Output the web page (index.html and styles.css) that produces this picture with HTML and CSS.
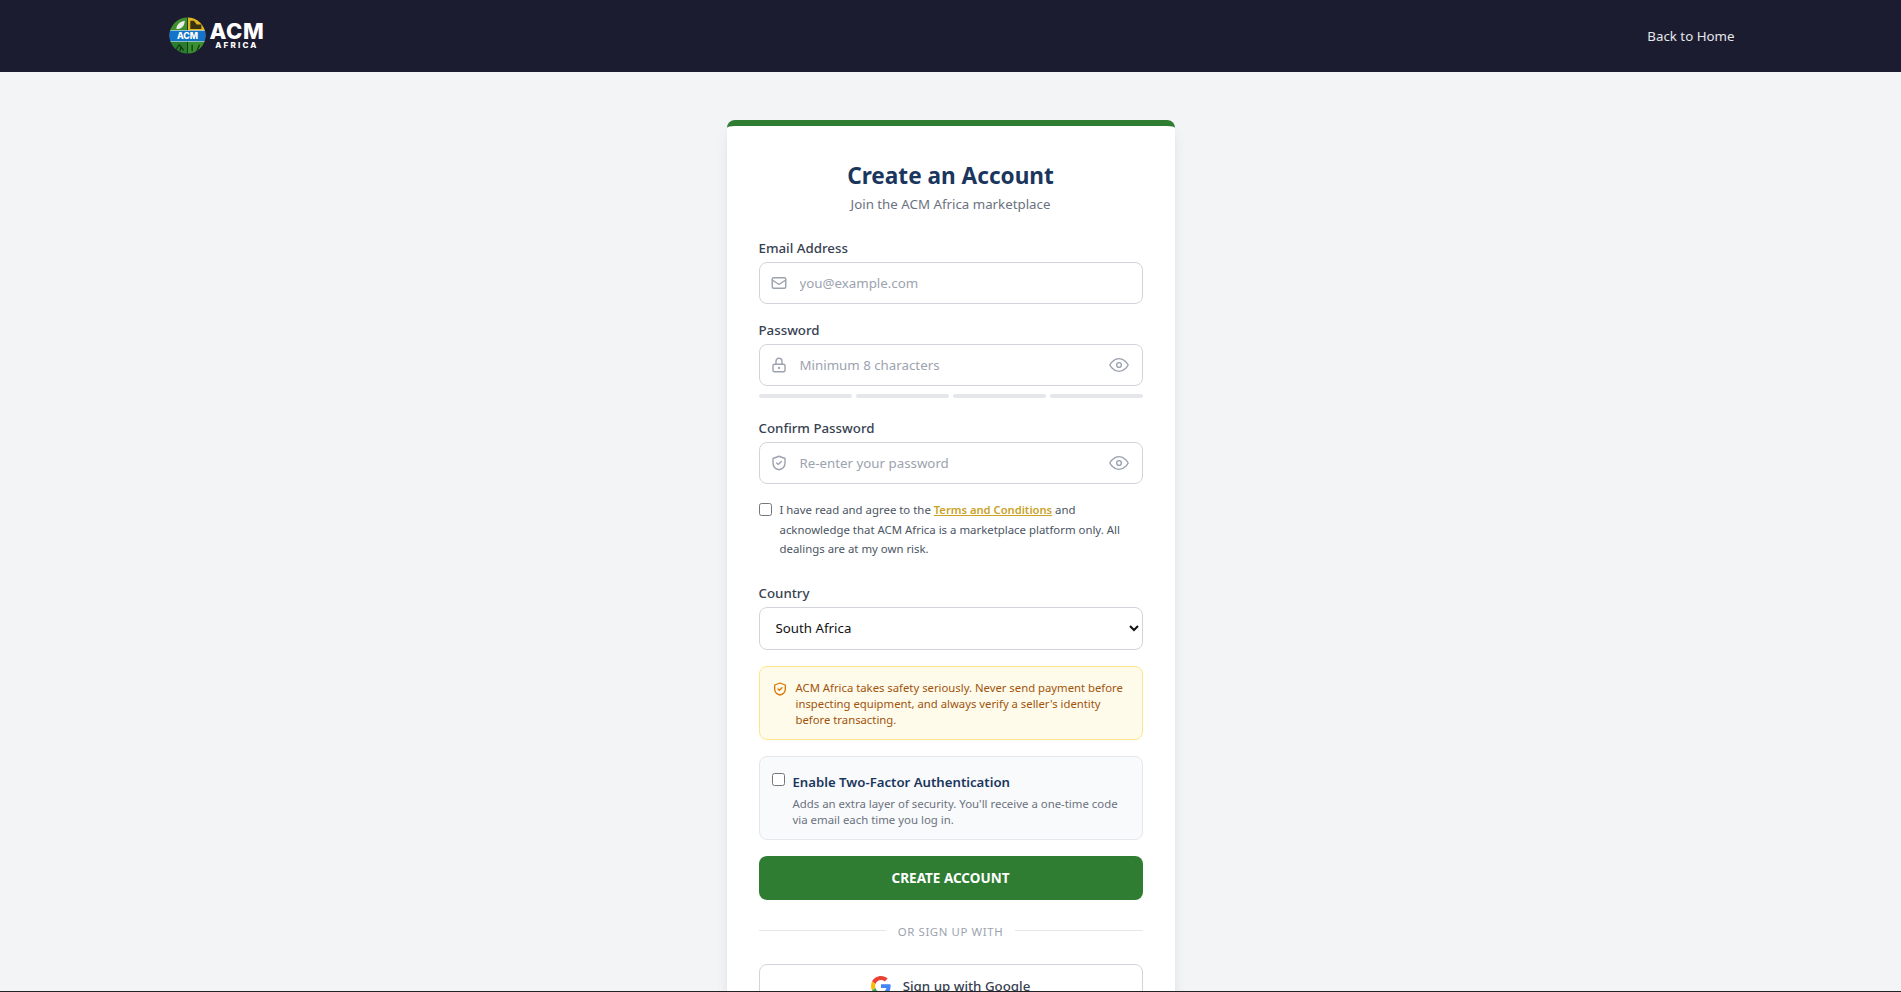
FILE: index.html
```html
<!DOCTYPE html>
<html lang="en">
<head>
<meta charset="utf-8">
<title>Create an Account - ACM Africa</title>
<link rel="stylesheet" href="styles.css">
</head>
<body>
<nav class="nav">
  <div class="nav-inner">
    <a class="brand" href="#">
      <svg class="brand-mark" viewBox="0 0 40 40" aria-hidden="true">
        <defs><clipPath id="disc"><circle cx="20" cy="20" r="19.500"/></clipPath></defs>
        <g clip-path="url(#disc)">
          <rect x="0" y="0" width="20" height="16" fill="#3f8f2e"/>
          <rect x="20" y="0" width="20" height="16" fill="#e2b61f"/>
          <rect x="0" y="26" width="20" height="14" fill="#2a7d2c"/>
          <rect x="20" y="26" width="20" height="14" fill="#3a8f30"/>
          <path d="M8 13c0-5 4-8 9-9 0 5-3 9-9 9z" fill="#e8efe6"/>
          <path d="M23 13V4h4l3 4h5v5z" fill="#3b3312"/>
          <path d="M7 36l4-6 5 6M12 37l1-6M25 37v-7M30 37l3-7" fill="none" stroke="#123a16" stroke-width="1.400"/>
          <path d="M20 0v16M20 26v14" stroke="#12351a" stroke-width="1"/>
          <rect x="0" y="14.500" width="40" height="12" fill="#1275c9" stroke="#e8f2f8" stroke-width=".6"/>
        </g>
        <text class="mark-text" x="20" y="24.200" text-anchor="middle">ACM</text>
      </svg>
      <span class="brand-text"><span class="brand-acm">ACM</span><span class="brand-africa">AFRICA</span></span>
    </a>
    <a class="nav-link" href="#">Back to Home</a>
  </div>
</nav>

<main class="page">
  <section class="card">
    <h1 class="title">Create an Account</h1>
    <p class="subtitle">Join the ACM Africa marketplace</p>

    <form class="form">
      <div class="field">
        <label class="label" for="email">Email Address</label>
        <div class="input-wrap">
          <svg class="ico lead" viewBox="0 0 24 24"><rect x="3" y="5" width="18" height="14" rx="2"/><path d="M3 8l9 6 9-6"/></svg>
          <input class="input" id="email" type="email" placeholder="you@example.com">
        </div>
      </div>

      <div class="field">
        <label class="label" for="pw">Password</label>
        <div class="input-wrap">
          <svg class="ico lead" viewBox="0 0 24 24"><rect x="4" y="11" width="16" height="10" rx="2"/><path d="M8 11V7a4 4 0 0 1 8 0v4"/><circle cx="12" cy="16" r=".6"/></svg>
          <input class="input has-trail" id="pw" type="password" placeholder="Minimum 8 characters">
          <svg class="ico trail" viewBox="0 0 24 24"><path d="M2 12s3.600-7 10-7 10 7 10 7-3.600 7-10 7-10-7-10-7z"/><circle cx="12" cy="12" r="2.600"/></svg>
        </div>
        <div class="strength"><span class="seg"></span><span class="seg"></span><span class="seg"></span><span class="seg"></span></div>
      </div>

      <div class="field">
        <label class="label" for="pw2">Confirm Password</label>
        <div class="input-wrap">
          <svg class="ico lead" viewBox="0 0 24 24"><path d="M12 3l8 3v6c0 5-3.400 8-8 9-4.600-1-8-4-8-9V6z"/><path d="M9 12l2 2 4-4"/></svg>
          <input class="input has-trail" id="pw2" type="password" placeholder="Re-enter your password">
          <svg class="ico trail" viewBox="0 0 24 24"><path d="M2 12s3.600-7 10-7 10 7 10 7-3.600 7-10 7-10-7-10-7z"/><circle cx="12" cy="12" r="2.600"/></svg>
        </div>
      </div>

      <label class="terms">
        <input class="check" type="checkbox">
        <span>I have read and agree to the <a class="terms-link" href="#">Terms and Conditions</a> and acknowledge that ACM Africa is a marketplace platform only. All dealings are at my own risk.</span>
      </label>

      <div class="field">
        <label class="label" for="country">Country</label>
        <select class="select" id="country"><option>South Africa</option><option>Kenya</option><option>Nigeria</option></select>
      </div>

      <div class="alert">
        <svg class="alert-ico" viewBox="0 0 24 24"><path d="M12 3l8 3v6c0 5-3.400 8-8 9-4.600-1-8-4-8-9V6z"/><path d="M9 12l2 2 4-4"/></svg>
        <p class="alert-text">ACM Africa takes safety seriously. Never send payment before inspecting equipment, and always verify a seller's identity before transacting.</p>
      </div>

      <div class="tfa">
        <input class="check tfa-check" type="checkbox" id="tfa">
        <div>
          <label class="tfa-title" for="tfa">Enable Two-Factor Authentication</label>
          <p class="tfa-desc">Adds an extra layer of security. You'll receive a one-time code via email each time you log in.</p>
        </div>
      </div>

      <button class="submit" type="button">CREATE ACCOUNT</button>

      <div class="divider"><span class="divider-text">OR SIGN UP WITH</span></div>

      <button class="google" type="button">
        <svg class="google-ico" viewBox="0 0 48 48"><path fill="#EA4335" d="M24 9.500c3.540 0 6.710 1.220 9.210 3.600l6.850-6.850C35.900 2.380 30.470 0 24 0 14.620 0 6.510 5.380 2.560 13.220l7.980 6.190C12.430 13.720 17.740 9.500 24 9.500z"/><path fill="#4285F4" d="M46.980 24.550c0-1.570-.15-3.090-.38-4.550H24v9.020h12.940c-.58 2.960-2.260 5.480-4.780 7.180l7.730 6c4.510-4.180 7.090-10.360 7.090-17.650z"/><path fill="#FBBC05" d="M10.530 28.590c-.48-1.450-.76-2.990-.76-4.590s.27-3.140.76-4.590l-7.980-6.190C.92 16.460 0 20.120 0 24c0 3.880.92 7.540 2.560 10.780l7.970-6.190z"/><path fill="#34A853" d="M24 48c6.480 0 11.930-2.130 15.890-5.810l-7.730-6c-2.150 1.450-4.920 2.300-8.160 2.300-6.260 0-11.570-4.220-13.470-9.910l-7.980 6.190C6.510 42.620 14.620 48 24 48z"/></svg>
        Sign up with Google
      </button>
    </form>
  </section>
</main>
<div class="edge"></div>
</body>
</html>
```

FILE: styles.css
```css
* { box-sizing: border-box; }
html, body { margin: 0; padding: 0; }
body { background: #f3f4f6; font-family: "Noto Sans", sans-serif; color: #374151; }

.nav { background: #1c1c30; height: 72px; }
.nav-inner { max-width: 1600px; height: 100%; margin: 0 auto; padding: 0 16px 1px; display: flex; align-items: center; justify-content: space-between; }
.brand { display: flex; align-items: center; gap: 4px; margin-left: 2px; text-decoration: none; color: #fff; font-family: Inter, sans-serif; }
.brand-mark { width: 37px; height: 37px; display: block; }
.mark-text { font: 800 9.500px Inter, sans-serif; fill: #fff; }
.brand-text { display: flex; flex-direction: column; align-items: center; color: #fff; }
.brand-acm { font-size: 22px; font-weight: 800; line-height: 20px; letter-spacing: .6px; }
.brand-africa { font-size: 8px; font-weight: 800; line-height: 9px; letter-spacing: 2.200px; }
.nav-link { color: #e5e7eb; font-size: 13.300px; text-decoration: none; }

.page { display: flex; justify-content: center; padding: 48px 16px; }
.card { width: 448px; background: #fff; border-top: 6px solid #2e7d32; border-radius: 8px; padding: 32px; box-shadow: 0 10px 15px -3px rgba(0,0,0,.1), 0 4px 6px -4px rgba(0,0,0,.1); }
.title { margin: 0; text-align: center; font-size: 22.600px; line-height: 36px; font-weight: 700; color: #1a365d; }
.subtitle { margin: 0 0 24px; text-align: center; font-size: 13.300px; line-height: 20px; color: #6b7280; }

.field { margin-bottom: 16px; }
.label { display: block; margin-bottom: 4px; font-size: 13.300px; line-height: 20px; font-weight: 500; color: #374151; }
.input-wrap { position: relative; }
.input { display: block; width: 100%; height: 42px; padding: 0 16px 0 40px; border: 1px solid #d1d5db; border-radius: 8px; background: #fff; font: 13.300px/20px "Noto Sans", sans-serif; color: #111827; outline: 0; }
.input::placeholder { color: #9ca3af; opacity: 1; }
.has-trail { padding-right: 44px; }
.ico { position: absolute; top: 50%; transform: translateY(-50%); fill: none; stroke: #9ca3af; stroke-width: 1.900; stroke-linecap: round; stroke-linejoin: round; }
.lead { left: 11px; width: 18px; height: 18px; }
.trail { right: 13px; width: 22px; height: 22px; stroke-width: 1.500; }

.strength { display: flex; gap: 4px; margin: 8px 0 20px; }
.seg { flex: 1; height: 4px; border-radius: 2px; background: #e5e7eb; }

.terms { display: flex; align-items: flex-start; gap: 8px; margin-bottom: 24px; font-size: 11.400px; line-height: 19.500px; color: #4b5563; }
.check { width: 13px; height: 13px; margin: 3px 0 0; flex: none; }
.terms-link { color: #c9a227; font-size: 11.200px; font-weight: 600; text-decoration: underline; }

.select { display: block; width: 100%; height: 43px; padding: 0 12px; border: 1px solid #d1d5db; border-radius: 8px; background: #fff; font: 13.300px "Noto Sans", sans-serif; color: #111; }

.alert { display: flex; gap: 8px; margin-bottom: 16px; padding: 13px 12px 11px; background: #fffbeb; border: 1px solid #fde68a; border-radius: 8px; }
.alert-ico { width: 16px; height: 16px; margin-top: 1px; flex: none; fill: none; stroke: #d97706; stroke-width: 2; stroke-linecap: round; stroke-linejoin: round; }
.alert-text { margin: 0; font-size: 11.300px; line-height: 16px; color: #a0540c; }

.tfa { display: flex; align-items: flex-start; gap: 8px; margin-bottom: 16px; padding: 12px 12px 11px; background: #f9fafb; border: 1px solid #e5e7eb; border-radius: 8px; }
.tfa-check { margin-top: 4px; }
.tfa-title { display: block; font-size: 13.200px; line-height: 20px; font-weight: 600; color: #1a365d; margin-top: 3px; }
.tfa-desc { margin: 4px 0 0; font-size: 11.400px; line-height: 16px; color: #6b7280; }

.submit { display: block; width: 100%; height: 44px; border: 0; border-radius: 8px; background: #2e7d32; color: #fff; font: 700 13.500px "Noto Sans", sans-serif; }

.divider { display: flex; align-items: center; gap: 12px; margin: 24px 0; height: 16px; }
.divider::before, .divider::after { content: ""; flex: 1; height: 1px; background: #e5e7eb; position: relative; top: -1px; }
.divider-text { font-size: 11.400px; letter-spacing: .6px; color: #9ca3af; }

.google { display: flex; align-items: center; justify-content: center; gap: 12px; width: 100%; height: 44px; border: 1px solid #d1d5db; border-radius: 8px; background: #fff; font: 500 13.300px "Noto Sans", sans-serif; color: #374151; }
.google-ico { width: 20px; height: 20px; }

.edge { position: fixed; left: 0; right: 0; bottom: 0; height: 1px; background: #222; }
```
